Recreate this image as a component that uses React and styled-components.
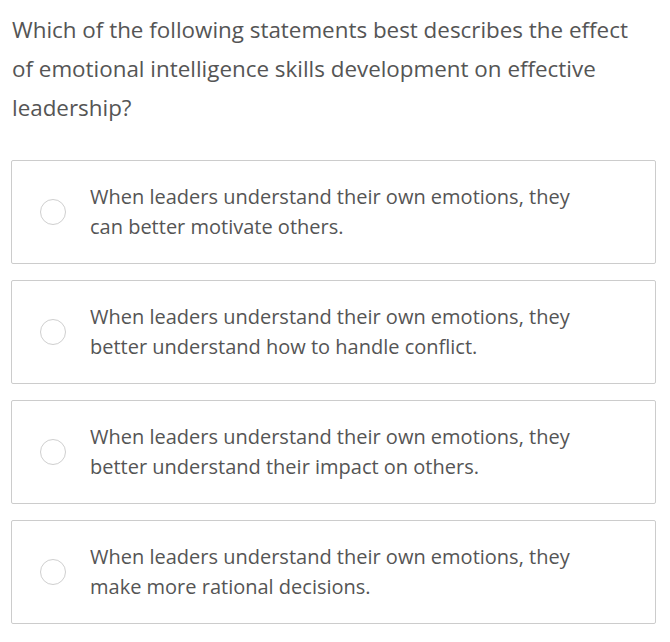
import React from "react";
import styled, { createGlobalStyle } from "styled-components";

const Global = createGlobalStyle`
  html, body { margin: 0; padding: 0; background: #fff; }
  body { font-family: "Open Sans", "Liberation Sans", sans-serif; }
`;

const Wrapper = styled.div`
  padding: 10px 14px 0 11px;
  width: 670px;
  box-sizing: border-box;
`;

const Question = styled.p`
  margin: 0 0 33px 1px;
  max-width: 630px;
  font-size: 22.4px;
  line-height: 39px;
  color: #555;
  font-weight: 400;
`;

const Options = styled.div`
  display: flex;
  flex-direction: column;
  gap: 16px;
`;

const Option = styled.label`
  display: flex;
  align-items: center;
  border: 1px solid #cccccc;
  border-radius: 2px;
  padding: 21px 20px 21px 28px;
  min-height: 60px;
  cursor: pointer;
`;

const Radio = styled.span`
  flex: 0 0 auto;
  width: 24px;
  height: 24px;
  border: 1px solid #cfcfcf;
  border-radius: 50%;
  background: #fff;
  margin-right: 24px;
`;

const OptionText = styled.span`
  font-size: 20px;
  line-height: 30px;
  color: #555;
  max-width: 505px;
`;

const options = [
  "When leaders understand their own emotions, they can better motivate others.",
  "When leaders understand their own emotions, they better understand how to handle conflict.",
  "When leaders understand their own emotions, they better understand their impact on others.",
  "When leaders understand their own emotions, they make more rational decisions.",
];

export default function App() {
  return (
    <>
      <Global />
      <Wrapper>
        <Question>
          Which of the following statements best describes the effect of
          emotional intelligence skills development on effective leadership?
        </Question>
        <Options>
          {options.map((o) => (
            <Option key={o}>
              <Radio />
              <OptionText>{o}</OptionText>
            </Option>
          ))}
        </Options>
      </Wrapper>
    </>
  );
}
